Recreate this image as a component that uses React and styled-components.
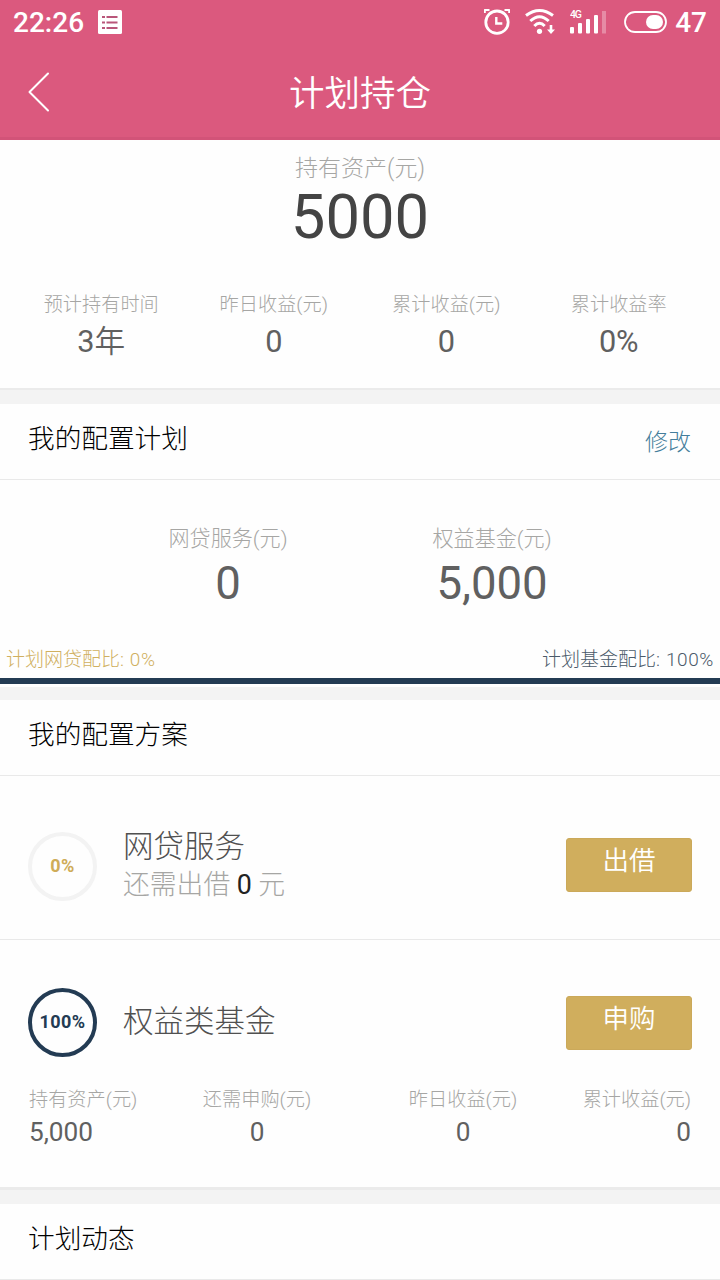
import React from "react";
import styled, { createGlobalStyle } from "styled-components";

const GlobalStyle = createGlobalStyle`
  * { box-sizing: border-box; }
  body {
    margin: 0;
    background: #fefefe;
    font-family: Roboto, "Noto Sans CJK SC", sans-serif;
    font-weight: 300;
    -webkit-font-smoothing: antialiased;
  }
`;

const Screen = styled.div`
  width: 720px;
  height: 1280px;
  overflow: hidden;
  background: #fefefe;
`;

const TopArea = styled.header`
  height: 140px;
  background: #db597e;
  border-bottom: 3px solid #d25378;
  color: #fff;
`;

const StatusBar = styled.div`
  display: flex;
  align-items: center;
  justify-content: space-between;
  height: 48px;
  padding: 0 13px 4px 13px;
`;

const StatusGroup = styled.div`
  display: flex;
  align-items: center;
`;

const StatusText = styled.span`
  margin-left: ${(p) => p.$gap || 0}px;
  padding-top: 1px;
  font-size: 28px;
  font-weight: 500;
  line-height: 43px;
`;

const StatusIcon = styled.svg`
  display: block;
  flex: none;
  margin-left: ${(p) => p.$gap}px;
`;

const NavBar = styled.div`
  display: grid;
  grid-template-columns: 100px 1fr 100px;
  height: 89px;
`;

const BackIcon = styled.svg`
  display: block;
  margin: 22px 0 0 26px;
`;

const Title = styled.h1`
  margin: 0;
  text-align: center;
  font-size: 35.5px;
  font-weight: 350;
  line-height: 92px;
`;

const Text = styled.div`
  font-size: ${(p) => p.$size}px;
  line-height: ${(p) => p.$line}px;
  white-space: nowrap;
`;

const Label = styled(Text)`
  padding-top: 2px;
  line-height: ${(p) => p.$line - 2}px;
  color: #a6a6a4;
`;

const Value = styled(Text)`
  color: ${(p) => p.$color || "#606060"};
  font-weight: 400;
`;

const Unit = styled.span`
  font-weight: 350;
`;

const Summary = styled.section`
  height: 248px;
  padding-top: 14px;
  text-align: center;
`;

const SummaryStats = styled.div`
  display: grid;
  grid-template-columns: repeat(4, 1fr);
  margin-top: 37px;
  padding: 0 15px;
`;

const Divider = styled.div`
  height: ${(p) => p.$height}px;
  background: #f3f3f3;
  border-top: ${(p) => p.$edge}px solid #ebebeb;
`;

const SectionHead = styled.div`
  display: flex;
  justify-content: space-between;
  height: 76px;
  padding: 0 29px 0 28px;
  border-bottom: 1px solid #e9e9e9;
`;

const SectionTitle = styled.h2`
  margin: 0;
  font-size: 26.67px;
  font-weight: 300;
  line-height: 71px;
  color: #000;
`;

const EditLink = styled.a`
  font-size: 23px;
  line-height: 77px;
  color: #447d9b;
`;

const Allocation = styled.section`
  height: 207px;
  padding-top: 44px;
  text-align: center;
`;

const AllocationColumns = styled.div`
  display: grid;
  grid-template-columns: 1fr 1fr;
  padding: 0 96px;
`;

const RatioRow = styled.div`
  display: flex;
  justify-content: space-between;
  margin-top: 26px;
  padding: 0 6px 3px 6px;
  background: #fefefe;
`;

const Ratio = styled(Text)`
  height: 34px;
  color: ${(p) => p.$color};
`;

const RatioFigure = styled.span`
  letter-spacing: 0.6px;
`;

const RatioBar = styled.div`
  height: 6px;
  background: #233b53;
`;

const Product = styled.div`
  display: flex;
  align-items: flex-start;
  height: ${(p) => p.$height}px;
  padding: 0 28px;
`;

const LoanProduct = styled(Product)`
  border-bottom: 1px solid #e9e9e9;
`;

const Ring = styled.div`
  flex: none;
  width: 69px;
  height: 69px;
  margin-top: ${(p) => p.$top}px;
  border: 4.5px solid ${(p) => p.$ring};
  border-radius: 50%;
  text-align: center;
  font-size: 18px;
  font-weight: 700;
  line-height: 60px;
  letter-spacing: 0.4px;
  white-space: nowrap;
  color: ${(p) => p.$color};
`;

const ProductText = styled.div`
  flex: 1;
  margin: ${(p) => p.$top}px 0 0 26px;
`;

const ProductName = styled(Text)`
  padding-top: 1px;
  line-height: ${(p) => p.$line - 1}px;
  color: #505050;
`;

const Amount = styled.span`
  font-weight: 400;
  color: #222;
`;

const ActionButton = styled.button`
  width: 126px;
  height: 54px;
  margin-top: ${(p) => p.$top}px;
  padding: 0 0 8px;
  border: 1px solid #cba95a;
  border-radius: 3px;
  background: #d0ae5d;
  color: #fff;
  font-family: inherit;
  font-size: 26.5px;
  font-weight: 350;
  line-height: 44px;
`;

const FundStats = styled.div`
  display: grid;
  grid-template-columns: 125px 206px 206px 125px;
  height: 102px;
  padding: 0 29px;
  text-align: center;

  > :first-child { text-align: left; }
  > :last-child { text-align: right; }
`;

function Stat({ label, labelSize, labelLine, size, line, children }) {
  return (
    <div>
      <Label $size={labelSize} $line={labelLine}>{label}</Label>
      <Value $size={size} $line={line}>{children}</Value>
    </div>
  );
}

function NoteIcon() {
  return (
    <StatusIcon $gap={14} width="24" height="24" viewBox="0 0 24 24">
      <rect width="24" height="24" rx="1.5" fill="#fff" />
      <path d="M4 7h3M8.500 7h11M4 12.500h3M8.500 12.500h11M4 18h3M8.500 18h11" stroke="#b9567a" strokeWidth="2" />
    </StatusIcon>
  );
}

function AlarmIcon() {
  return (
    <StatusIcon $gap={0} width="26" height="28" viewBox="0 0 26 28" fill="none" stroke="#fff">
      <circle cx="13" cy="14.200" r="11.200" strokeWidth="2.800" />
      <path d="M12.300 9v6.500h6" strokeWidth="2.400" />
      <path d="M0.800 5V2H5.500M25.200 5V2H20.500" strokeWidth="2" strokeLinejoin="round" />
    </StatusIcon>
  );
}

function WifiIcon() {
  return (
    <StatusIcon $gap={15} width="31" height="28" viewBox="0 0 31 28" fill="none" stroke="#fff">
      <path d="M1 7.500Q14.500 -2.500 28 7.500" strokeWidth="3" />
      <path d="M5.300 13Q14.500 4.500 23.700 13" strokeWidth="3" />
      <path d="M9.300 18Q14.500 12.500 19.700 18" strokeWidth="3" />
      <circle cx="14.500" cy="23.300" r="2.600" fill="#fff" stroke="none" />
      <path d="M24.700 17h2.600v4.500h2.700l-4 4.500-4-4.500h2.700z" fill="#fff" stroke="none" />
    </StatusIcon>
  );
}

function SignalIcon() {
  return (
    <StatusIcon $gap={14} width="37" height="28" viewBox="0 0 37 28" fill="#fff">
      <text x="0" y="10" fontSize="10.500" fontWeight="500" fontFamily="Roboto, sans-serif" textLength="12">4G</text>
      <rect x="0" y="19" width="4" height="6.500" rx="1" />
      <rect x="8" y="15" width="4" height="10.500" rx="1" />
      <rect x="16" y="11" width="4" height="14.500" rx="1" />
      <rect x="24" y="7" width="4" height="18.500" rx="1" />
      <rect x="32" y="3" width="4" height="22.500" opacity="0.300" />
    </StatusIcon>
  );
}

function BatteryIcon() {
  return (
    <StatusIcon $gap={17} width="43" height="22" viewBox="0 0 43 22">
      <rect x="1" y="1" width="41" height="20" rx="10" fill="none" stroke="#fff" strokeWidth="1.800" />
      <rect x="22" y="4" width="17" height="14" rx="7" fill="#fff" />
    </StatusIcon>
  );
}

const summaryStats = [
  { label: "预计持有时间", value: "3", unit: "年" },
  { label: "昨日收益(元)", value: "0" },
  { label: "累计收益(元)", value: "0" },
  { label: "累计收益率", value: "0%" },
];

const fundStats = [
  { label: "持有资产(元)", value: "5,000" },
  { label: "还需申购(元)", value: "0" },
  { label: "昨日收益(元)", value: "0" },
  { label: "累计收益(元)", value: "0" },
];

export default function App() {
  return (
    <Screen>
      <GlobalStyle />
      <TopArea>
        <StatusBar>
          <StatusGroup>
            <StatusText>22:26</StatusText>
            <NoteIcon />
          </StatusGroup>
          <StatusGroup>
            <AlarmIcon />
            <WifiIcon />
            <SignalIcon />
            <BatteryIcon />
            <StatusText $gap={8}>47</StatusText>
          </StatusGroup>
        </StatusBar>
        <NavBar>
          <BackIcon width="26" height="44" viewBox="0 0 26 44" fill="none" stroke="#fff" strokeWidth="2" strokeLinecap="round" strokeLinejoin="round">
            <path d="M22 3.500L3.500 22L22 40.500" />
          </BackIcon>
          <Title>计划持仓</Title>
        </NavBar>
      </TopArea>

      <Summary>
        <Label $size={23} $line={28}>持有资产(元)</Label>
        <Value $size={61.5} $line={71} $color="#444444">5000</Value>
        <SummaryStats>
          {summaryStats.map((s) => (
            <Stat key={s.label} label={s.label} labelSize={19.2} labelLine={27} size={30.7} line={49}>
              {s.value}
              {s.unit && <Unit>{s.unit}</Unit>}
            </Stat>
          ))}
        </SummaryStats>
      </Summary>

      <Divider $height={16} $edge={2} />
      <SectionHead>
        <SectionTitle>我的配置计划</SectionTitle>
        <EditLink>修改</EditLink>
      </SectionHead>
      <Allocation>
        <AllocationColumns>
          <Stat label="网贷服务(元)" labelSize={21.1} labelLine={28} size={45.5} line={63}>0</Stat>
          <Stat label="权益基金(元)" labelSize={21.1} labelLine={28} size={45.5} line={63}>5,000</Stat>
        </AllocationColumns>
        <RatioRow>
          <Ratio $size={19} $line={37} $color="#d0b05f">
            计划网贷配比<RatioFigure>: 0%</RatioFigure>
          </Ratio>
          <Ratio $size={19} $line={37} $color="#4a5a69">
            计划基金配比<RatioFigure>: 100%</RatioFigure>
          </Ratio>
        </RatioRow>
        <RatioBar />
      </Allocation>

      <Divider $height={13} $edge={0} />
      <SectionHead>
        <SectionTitle>我的配置方案</SectionTitle>
      </SectionHead>
      <LoanProduct $height={164}>
        <Ring $top={56} $ring="#f3f3f3" $color="#cfac58">0%</Ring>
        <ProductText $top={50}>
          <ProductName $size={30.5} $line={40}>网贷服务</ProductName>
          <Label $size={26.8} $line={36}>还需出借 <Amount>0</Amount> 元</Label>
        </ProductText>
        <ActionButton $top={62}>出借</ActionButton>
      </LoanProduct>
      <Product $height={145}>
        <Ring $top={48} $ring="#233b53" $color="#233b53">100%</Ring>
        <ProductText $top={61}>
          <ProductName $size={30.5} $line={41}>权益类基金</ProductName>
        </ProductText>
        <ActionButton $top={56}>申购</ActionButton>
      </Product>
      <FundStats>
        {fundStats.map((s) => (
          <Stat key={s.label} label={s.label} labelSize={19.2} labelLine={27} size={26.2} line={40}>
            {s.value}
          </Stat>
        ))}
      </FundStats>

      <Divider $height={17} $edge={3} />
      <SectionHead>
        <SectionTitle>计划动态</SectionTitle>
      </SectionHead>
    </Screen>
  );
}
